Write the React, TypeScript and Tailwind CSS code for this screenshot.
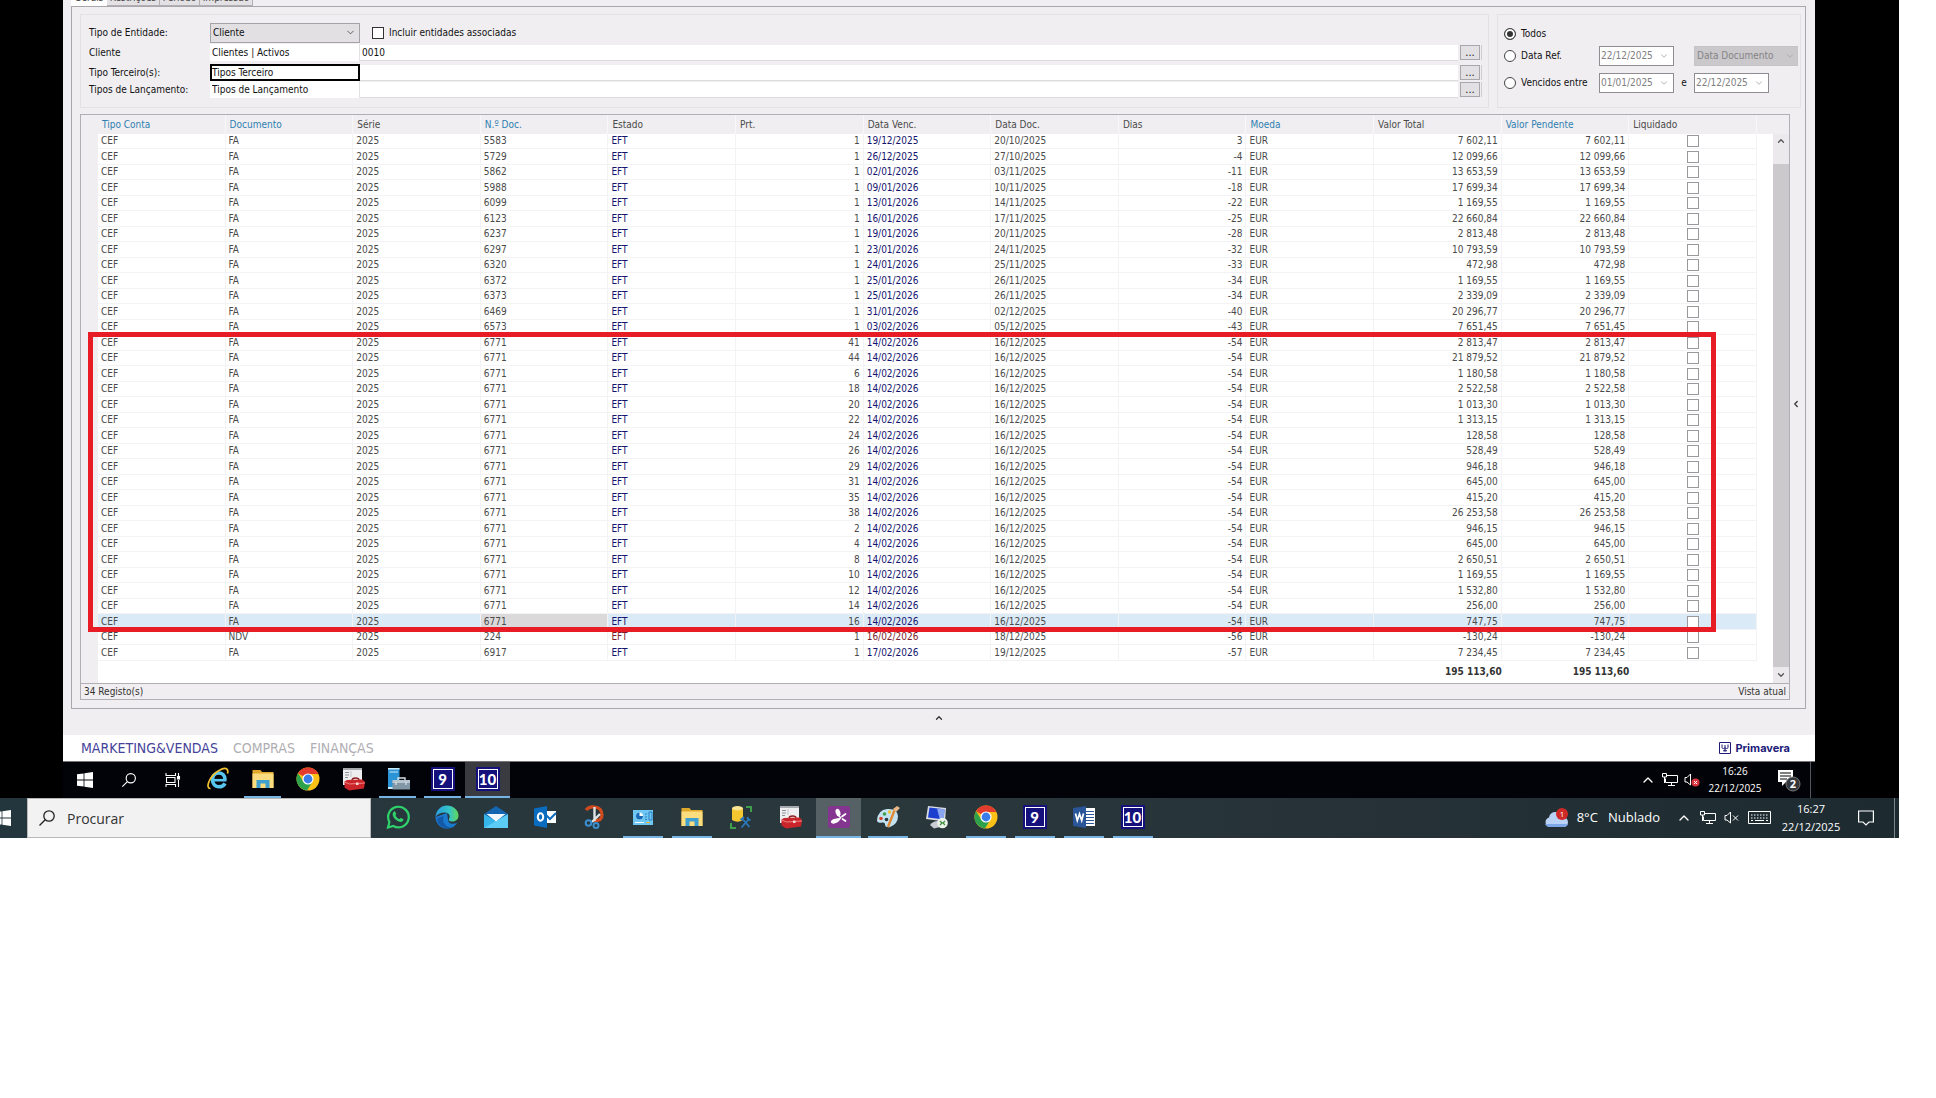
/**
 * @file App.tsx
 * @description Pending documents list inside a remote desktop session.
 */

import clsx from "clsx";
import {
  ChevronDown,
  ChevronLeft,
  ChevronUp,
} from "lucide-react";
import type { JSX, ReactNode } from "react";

type DocumentRow = {
  account: string;
  type: string;
  number: string;
  installment: number;
  dueDate: string;
  docDate: string;
  days: number;
  total: string;
};

function row(
  number: string,
  installment: number,
  dueDate: string,
  docDate: string,
  days: number,
  total: string,
  type = "FA",
): DocumentRow {
  return {
    account: "CEF",
    type,
    number,
    installment,
    dueDate,
    docDate,
    days,
    total,
  };
}

function installmentRow(installment: number, total: string): DocumentRow {
  return row("6771", installment, "14/02/2026", "16/12/2025", -54, total);
}

const documents: DocumentRow[] = [
  row("5583", 1, "19/12/2025", "20/10/2025", 3, "7 602,11"),
  row("5729", 1, "26/12/2025", "27/10/2025", -4, "12 099,66"),
  row("5862", 1, "02/01/2026", "03/11/2025", -11, "13 653,59"),
  row("5988", 1, "09/01/2026", "10/11/2025", -18, "17 699,34"),
  row("6099", 1, "13/01/2026", "14/11/2025", -22, "1 169,55"),
  row("6123", 1, "16/01/2026", "17/11/2025", -25, "22 660,84"),
  row("6237", 1, "19/01/2026", "20/11/2025", -28, "2 813,48"),
  row("6297", 1, "23/01/2026", "24/11/2025", -32, "10 793,59"),
  row("6320", 1, "24/01/2026", "25/11/2025", -33, "472,98"),
  row("6372", 1, "25/01/2026", "26/11/2025", -34, "1 169,55"),
  row("6373", 1, "25/01/2026", "26/11/2025", -34, "2 339,09"),
  row("6469", 1, "31/01/2026", "02/12/2025", -40, "20 296,77"),
  row("6573", 1, "03/02/2026", "05/12/2025", -43, "7 651,45"),
  installmentRow(41, "2 813,47"),
  installmentRow(44, "21 879,52"),
  installmentRow(6, "1 180,58"),
  installmentRow(18, "2 522,58"),
  installmentRow(20, "1 013,30"),
  installmentRow(22, "1 313,15"),
  installmentRow(24, "128,58"),
  installmentRow(26, "528,49"),
  installmentRow(29, "946,18"),
  installmentRow(31, "645,00"),
  installmentRow(35, "415,20"),
  installmentRow(38, "26 253,58"),
  installmentRow(2, "946,15"),
  installmentRow(4, "645,00"),
  installmentRow(8, "2 650,51"),
  installmentRow(10, "1 169,55"),
  installmentRow(12, "1 532,80"),
  installmentRow(14, "256,00"),
  installmentRow(16, "747,75"),
  row("224", 1, "16/02/2026", "18/12/2025", -56, "-130,24", "NDV"),
  row("6917", 1, "17/02/2026", "19/12/2025", -57, "7 234,45"),
];

const columns = [
  { label: "Tipo Conta", sortable: true },
  { label: "Documento", sortable: true },
  { label: "Série", sortable: false },
  { label: "N.º Doc.", sortable: true },
  { label: "Estado", sortable: false },
  { label: "Prt.", sortable: false },
  { label: "Data Venc.", sortable: false },
  { label: "Data Doc.", sortable: false },
  { label: "Dias", sortable: false },
  { label: "Moeda", sortable: true },
  { label: "Valor Total", sortable: false },
  { label: "Valor Pendente", sortable: true },
  { label: "Liquidado", sortable: false },
];

function Cell({
  children,
  className,
}: {
  children?: ReactNode;
  className?: string;
}): JSX.Element {
  return (
    <td
      className={clsx(
        "border-r border-b border-[#f3f2f4] px-[3px] py-0",
        className,
      )}
    >
      {children}
    </td>
  );
}

function BrowseButton({ label }: { label: string }): JSX.Element {
  return (
    <button
      type="button"
      aria-label={label}
      className="h-[15px] w-5 border border-[#a9a7ab] bg-[#e2e0e3] text-[11px] leading-[11px] text-[#111]"
    >
      ...
    </button>
  );
}

function FilterRow({
  id,
  label,
  name,
  value,
  focused,
}: {
  id: string;
  label: string;
  name: string;
  value: string;
  focused?: boolean;
}): JSX.Element {
  return (
    <div className="flex h-[17px] items-center">
      <label htmlFor={id} className="w-[121px]">
        {label}
      </label>
      <input
        aria-label={`${label} filtro`}
        defaultValue={name}
        className={clsx(
          "h-[17px] w-[150px] bg-white",
          focused ? "border-2 border-black" : "border-r border-[#e3e1e4] px-[2px]",
        )}
      />
      <input
        id={id}
        defaultValue={value}
        className="h-4 min-w-0 flex-1 border-b border-[#dddbde] bg-white px-[2px]"
      />
      <div className="ml-[2px] flex w-[22px] border-r border-[#cfcdd0]">
        <BrowseButton label={`Procurar ${label}`} />
      </div>
    </div>
  );
}

function DateField({
  label,
  value,
}: {
  label: string;
  value: string;
}): JSX.Element {
  return (
    <div className="flex h-5 w-[75px] items-center border border-[#8f8d91] bg-white">
      <input
        aria-label={label}
        defaultValue={value}
        className="min-w-0 flex-1 pl-px text-[#808080]"
      />
      <ChevronDown className="mr-1 size-[10px] shrink-0 text-[#a5a5a5]" />
    </div>
  );
}

function RadioOption({
  label,
  checked,
}: {
  label: string;
  checked?: boolean;
}): JSX.Element {
  return (
    <label className="flex w-[95px] items-center gap-[5px]">
      <input
        type="radio"
        name="period"
        defaultChecked={checked}
        className="size-3 appearance-none rounded-full border border-[#444] bg-white checked:border-[#444] checked:bg-[#333] checked:shadow-[inset_0_0_0_2px_white]"
      />
      {label}
    </label>
  );
}

function Filters(): JSX.Element {
  return (
    <div className="flex gap-2 pr-1 text-[10px] leading-[14px] text-[#111]">
      <section className="h-[94px] flex-1 border border-[#e3e1e4] pt-2 pr-[6px] pl-2">
        <div className="flex h-5 items-center">
          <label htmlFor="entity" className="w-[121px]">
            Tipo de Entidade:
          </label>
          <div className="relative">
            <select
              id="entity"
              className="h-5 w-[150px] appearance-none border border-[#a5a3a7] bg-[#e2e0e3] px-[2px]"
            >
              <option>Cliente</option>
            </select>
            <ChevronDown className="absolute top-1 right-1 size-[11px] text-[#555]" />
          </div>
          <label className="ml-3 flex items-center gap-[5px]">
            <input
              type="checkbox"
              className="size-3 appearance-none border border-[#333] bg-white"
            />
            Incluir entidades associadas
          </label>
        </div>
        <div className="mt-px mb-[3px]">
          <FilterRow id="client" label="Cliente" name="Clientes | Activos" value="0010" />
        </div>
        <FilterRow id="third" label="Tipo Terceiro(s):" name="Tipos Terceiro" value="" focused />
        <FilterRow id="entry" label="Tipos de Lançamento:" name="Tipos de Lançamento" value="" />
      </section>
      <section className="h-[94px] w-[304px] border border-[#e3e1e4] pt-[9px] pl-[6px]">
        <div className="flex h-5 items-center">
          <RadioOption label="Todos" checked />
        </div>
        <div className="mt-[2px] flex h-5 items-center">
          <RadioOption label="Data Ref." />
          <DateField label="Data de referência" value="22/12/2025" />
          <div className="relative ml-5">
            <select
              aria-label="Tipo de data"
              className="h-5 w-[104px] appearance-none border border-[#c6c4c7] bg-[#cac8cb] px-[2px] text-[#858387]"
            >
              <option>Data Documento</option>
            </select>
            <ChevronDown className="absolute top-[5px] right-[3px] size-[10px] text-[#a5a3a7]" />
          </div>
        </div>
        <div className="mt-[7px] flex h-5 items-center">
          <RadioOption label="Vencidos entre" />
          <DateField label="Vencidos desde" value="01/01/2025" />
          <span className="w-5 text-center">e</span>
          <DateField label="Vencidos até" value="22/12/2025" />
        </div>
      </section>
    </div>
  );
}

function DocumentGrid(): JSX.Element {
  return (
    <div className="relative mt-[6px] min-w-0 flex-1 border border-[#b1afb3] bg-white text-[10px] text-[#4a4a4a]">
      <div className="flex">
        <div className="min-w-0 flex-1">
          <table className="w-full table-fixed border-separate border-spacing-0 leading-[14px]">
            <colgroup>
              <col className="w-[17px]" />
              {columns.map((column) => (
                <col key={column.label} />
              ))}
              <col className="w-4" />
            </colgroup>
            <thead>
              <tr className="h-[19px] bg-[#f0eef1] text-left">
                <th className="p-0" aria-label="Seleção" />
                {columns.map((column) => (
                  <th
                    key={column.label}
                    className={clsx(
                      "border-r border-[#f8f7f9] px-1 py-0 font-normal",
                      column.sortable && "text-[#2f7fb0]",
                    )}
                  >
                    {column.label}
                  </th>
                ))}
                <th className="p-0" aria-label="Espaço" />
              </tr>
            </thead>
            <tbody>
              {documents.map((doc) => {
                const selected = doc.installment === 16;
                const credit = doc.type === "NDV";
                const accent = credit ? "text-[#7d1c2a]" : "text-[#14146e]";
                const fill = selected && "bg-[#dbeaf7]";
                return (
                  <tr
                    key={`${doc.number}-${doc.installment}`}
                    className="odd:h-[15px] even:h-4"
                  >
                    <td className="bg-[#f0eef1] p-0" />
                    <Cell className={clsx(fill)}>{doc.account}</Cell>
                    <Cell className={clsx(fill)}>{doc.type}</Cell>
                    <Cell className={clsx(fill)}>2025</Cell>
                    <Cell className={clsx(selected && "bg-[#dcd9db]")}>{doc.number}</Cell>
                    <Cell className={clsx(accent, fill)}>EFT</Cell>
                    <Cell className={clsx("text-right", fill)}>{doc.installment}</Cell>
                    <Cell className={clsx(accent, fill)}>{doc.dueDate}</Cell>
                    <Cell className={clsx(fill)}>{doc.docDate}</Cell>
                    <Cell className={clsx("text-right", fill)}>{doc.days}</Cell>
                    <Cell className={clsx(fill)}>EUR</Cell>
                    <Cell className={clsx("text-right", fill)}>{doc.total}</Cell>
                    <Cell className={clsx("text-right", fill)}>{doc.total}</Cell>
                    <Cell className={clsx(fill)}>
                      <input
                        type="checkbox"
                        aria-label={`Liquidado ${doc.number}`}
                        className="mx-auto block size-3 appearance-none border border-[#9a989c] bg-white"
                      />
                    </Cell>
                    <td className="p-0" />
                  </tr>
                );
              })}
            </tbody>
            <tfoot>
              <tr className="h-[22px] font-bold text-[#333]">
                <td className="bg-[#f0eef1] p-0" />
                <td colSpan={10} className="p-0" />
                <td className="p-0 text-right">195 113,60</td>
                <td className="p-0 text-right">195 113,60</td>
                <td colSpan={2} className="p-0" />
              </tr>
            </tfoot>
          </table>
        </div>
        <div className="flex w-4 flex-col bg-[#cbc9cc]">
          <div className="h-[19px] bg-[#f0eef1]" />
          <button
            type="button"
            aria-label="Subir"
            className="flex h-[30px] justify-center bg-[#ebe9ec] pt-[2px]"
          >
            <ChevronUp className="size-[10px] text-[#555]" strokeWidth={3} />
          </button>
          <div className="flex-1" />
          <button
            type="button"
            aria-label="Descer"
            className="flex h-4 items-center justify-center bg-[#ebe9ec]"
          >
            <ChevronDown className="size-[10px] text-[#555]" strokeWidth={3} />
          </button>
        </div>
      </div>
      <footer className="flex h-4 items-center justify-between border-t border-[#b1afb3] bg-[#f0eef1] px-[3px] text-[#333]">
        <span>34 Registo(s)</span>
        <span>Vista atual</span>
      </footer>
      {/* highlight around the split invoice */}
      <div className="pointer-events-none absolute top-[217px] right-[73px] left-[7px] h-[300px] border-5 border-[#e81c24]" />
    </div>
  );
}

function WindowsIcon({ className }: { className?: string }): JSX.Element {
  return (
    <svg viewBox="0 0 16 16" className={clsx("size-4 shrink-0", className)} fill="#fff">
      <path d="M0 2.3 6.6 1.4v6.1H0zM7.4 1.3 16 0v7.5H7.4zM0 8.4h6.6v6.2L0 13.7zM7.4 8.4H16V16l-8.6-1.2z" />
    </svg>
  );
}

function SearchIcon({ className }: { className?: string }): JSX.Element {
  return (
    <svg viewBox="0 0 18 18" className={clsx("shrink-0", className)} fill="none" stroke="currentColor" strokeWidth="1.3">
      <circle cx="11" cy="7" r="5.2" />
      <path d="M7.2 10.8 1.5 16.5" />
    </svg>
  );
}

function TaskViewIcon(): JSX.Element {
  return (
    <svg viewBox="0 0 16 16" className="size-4" fill="none" stroke="#fff" strokeWidth="1.1">
      <path d="M1 1v2.500h9.500V1M1 15v-2.500h9.500V15M1.500 5.500h8.500v5H1.500zM13.500 1v3M13.500 8v7" />
      <rect x="12.500" y="4.500" width="2" height="2.500" fill="#fff" />
    </svg>
  );
}

function ExplorerLegacyIcon(): JSX.Element {
  return (
    <svg viewBox="0 0 24 24" className="size-6" fill="none">
      <path d="M19 12.500C19 8 16 6 12.800 6 9 6 6.500 9 6.500 13s3 6.800 6.500 6.800c3 0 4.800-1.200 6-3.500" stroke="#58c4f0" strokeWidth="3.600" />
      <path d="M6 13.200h14.500" stroke="#58c4f0" strokeWidth="2.600" />
      <path d="M4.500 21.500C-1 22 3 9 13 3.500 19 0 23 1 21.500 6.500" stroke="#f2c230" strokeWidth="1.700" />
    </svg>
  );
}

function FolderIcon(): JSX.Element {
  return (
    <svg viewBox="0 0 24 24" className="size-6">
      <path d="M1.500 3h8l1.500 2h11.500v16h-21z" fill="#e0a92c" />
      <path d="M1.500 6.500h21V21h-21z" fill="#fbdc7e" />
      <path d="M5.500 21v-8h13v8h-4v-4.500h-5V21z" fill="#3f9fcf" />
    </svg>
  );
}

function ChromeIcon(): JSX.Element {
  return (
    <svg viewBox="0 0 24 24" className="size-6">
      <circle cx="12" cy="12" r="11.500" fill="#fbc116" />
      <path d="M12 12 2 6.300A11.500 11.500 0 0 1 22 6.300L22 7H12z" fill="#e33b2e" />
      <path d="M2 6.300A11.500 11.500 0 0 0 11 23.500L16.500 14.500 12 12 7.300 14.500z" fill="#2da14c" />
      <circle cx="12" cy="12" r="5.600" fill="#fff" />
      <circle cx="12" cy="12" r="4.400" fill="#3b7de8" />
    </svg>
  );
}

function ToolboxIcon(): JSX.Element {
  return (
    <svg viewBox="0 0 24 24" className="size-6">
      <path d="M2 1h19v17H2z" fill="#eeeef0" />
      <path d="M2 1h19v2H2z" fill="#a6a9ae" />
      <path d="M4 5.500h4M4 8h4M4 10.500h3" stroke="#8d9096" />
      <path d="M10 4v6" stroke="#c2c5ca" />
      <path d="M11 13.500q0-2.500 3.500-2.500t3.500 2" fill="none" stroke="#8c1a1c" strokeWidth="1.300" />
      <path d="M3.500 14.500 6 13l15.500-.5L24 15l-1 6.500-15 2-4.500-3z" fill="#c9252b" />
      <path d="m3.500 15 5 2L24 16" fill="none" stroke="#ee8681" />
      <path d="M15 15.500h2.500v2.500H15z" fill="#f3d8d4" />
    </svg>
  );
}

function ServerIcon(): JSX.Element {
  return (
    <svg viewBox="0 0 24 24" className="size-6">
      <path d="M2 1h11.500v21H2z" fill="#2a94d6" />
      <path d="M2 1h11.500v1.500H2zM3.500 4.500h8.500v1H3.500zM2 20h8v2H2z" fill="#c9e8fa" />
      <path d="M12 13v-2h7v2" fill="none" stroke="#d7e0e6" strokeWidth="1.400" />
      <path d="M6.500 13H24v9.500H6.500z" fill="#8297a6" />
      <path d="M6.500 13H24v3H6.500z" fill="#b7c5cf" />
      <path d="M10 15v3M20 15v3" stroke="#e9eff3" />
    </svg>
  );
}

function ErpIcon({ version }: { version: string }): JSX.Element {
  return (
    <span className="flex size-6 items-center justify-center bg-[#14107c] p-[2px]">
      <span className="flex size-full items-center justify-center border border-white font-[Lato] text-[15px] leading-none font-black text-white">
        {version}
      </span>
    </span>
  );
}

function WhatsAppIcon(): JSX.Element {
  return (
    <svg viewBox="0 0 24 24" className="size-6" fill="none">
      <path d="M2 22.500 3.400 17A10.300 10.300 0 1 1 7.300 21z" stroke="#2fd16a" strokeWidth="2.200" />
      <path d="M7.200 7.200c1.500-1.800 2-1 3 1.500.2.800-1 1.300-.6 2 1 1.700 2 2.500 3.600 3.200.8.200 1-1.200 1.800-1 2.700 1.200 3 1.300 2 2.800-1.500 2-4 1.200-6.500-.4C8 13.300 5.500 10 7.200 7.200z" fill="#2fd16a" />
    </svg>
  );
}

function EdgeIcon(): JSX.Element {
  return (
    <svg viewBox="0 0 24 24" className="size-6">
      <defs>
        <linearGradient id="edgeTop" x1="0" x2="1">
          <stop offset="0" stopColor="#2a9be0" />
          <stop offset="0.600" stopColor="#35c3c9" />
          <stop offset="1" stopColor="#62d957" />
        </linearGradient>
      </defs>
      <path d="M.5 12A11.500 11.500 0 0 0 12 23.500c5 0 8.500-2.500 10-5.800-3 1.800-9 1.500-9-3.200L12 8z" fill="#1a7ad0" />
      <path d="M9 11c-2.500 5 1 11 7 11.500C9 25 1.500 20 2.500 13z" fill="#1458a8" />
      <path d="M.5 12C1 5 6 .5 12 .5S23.500 5 23.500 10.500c0 4-3 6-6.500 6-3 0-3.700-1.200-3-2.500 2-3.500-.5-6.500-4-6.500-4.500 0-8 2-9.500 4.500z" fill="url(#edgeTop)" />
    </svg>
  );
}

function MailIcon(): JSX.Element {
  return (
    <svg viewBox="0 0 24 24" className="size-6">
      <path d="M0 9 12 1l12 8-12 8z" fill="#1566b0" />
      <path d="M0 9v14h24z" fill="#35b5ea" />
      <path d="M24 9v14H0z" fill="#5accf5" />
      <path d="M2.500 9h19L12 16.500z" fill="#f2f9fd" />
    </svg>
  );
}

function OutlookIcon(): JSX.Element {
  return (
    <svg viewBox="0 0 24 24" className="size-6">
      <path d="M12 6h11v12H12z" fill="#fff" />
      <path d="m13 10 4 4 6-6" stroke="#0d6cbd" strokeWidth="2" fill="none" />
      <path d="M1 3.500 14 1v22L1 20.500z" fill="#0a6cbe" />
      <ellipse cx="7.500" cy="12" rx="2.700" ry="3.700" fill="none" stroke="#fff" strokeWidth="2" />
    </svg>
  );
}

function SnipIcon(): JSX.Element {
  return (
    <svg viewBox="0 0 24 24" className="size-6" fill="none">
      <path d="M4 5Q7 1 13 2q7 1 7 8 0 6-8 6" stroke="#d04a1e" strokeWidth="3.200" />
      <path d="M12.500 2v14M18 9l-8 8" stroke="#dfe3e6" strokeWidth="2.400" />
      <circle cx="6.500" cy="18" r="2.800" stroke="#3b8fd0" strokeWidth="2" />
      <circle cx="14" cy="20.500" r="2.500" stroke="#3b8fd0" strokeWidth="2" />
    </svg>
  );
}

function PanelIcon(): JSX.Element {
  return (
    <svg viewBox="0 0 24 24" className="size-6">
      <path d="M2 5h20v15H2z" fill="#6ec6f2" />
      <circle cx="8.500" cy="11" r="3.500" fill="#fff" />
      <path d="M8.500 11V7.500A3.500 3.500 0 1 0 12 11z" fill="#1769b5" />
      <path d="M14 9h2M14 12h2M14 14.500h2M18 7h3v8h-3z" fill="none" stroke="#2c7fc2" />
      <path d="M4 17.500h9" stroke="#fff" />
      <path d="M15 17.500h4" stroke="#f0b62f" />
    </svg>
  );
}

function DatabaseToolIcon(): JSX.Element {
  return (
    <svg viewBox="0 0 24 24" className="size-6" fill="none">
      <path d="M3 3v12q5.500 3.500 11 0V3z" fill="#f5c630" />
      <ellipse cx="8.500" cy="3.200" rx="5.500" ry="2.200" fill="#fbe593" />
      <path d="M17 2h5v5M2 18v5h5" stroke="#3ea04b" strokeWidth="2" />
      <path d="m13.500 14 7 8M20 14l-7.500 8.500" stroke="#2a78ba" strokeWidth="1.800" />
      <path d="m11.500 15 3.500-3M18.500 12l.5 2.500 2.500.5" stroke="#2a78ba" strokeWidth="2" />
    </svg>
  );
}

function SplashIcon(): JSX.Element {
  return (
    <svg viewBox="0 0 24 24" className="size-6">
      <rect x="1" y="1" width="22" height="22" rx="2" fill="#83358f" />
      <ellipse cx="11" cy="7.500" rx="2.300" ry="3.800" transform="rotate(-18 11 7.500)" fill="#fff" />
      <path d="M4 17.500q-1-2 3-3.500 5-1.500 7-1-2 4.500-6.500 5.500-2.800.5-3.500-1z" fill="#fff" />
      <path d="m15 11.500 3.500-2.500M15.500 14l3 2" stroke="#fff" strokeWidth="1.700" strokeLinecap="round" />
      <path d="M11.500 10.500 14 13" stroke="#fff" strokeWidth="1.500" />
    </svg>
  );
}

function PaintIcon(): JSX.Element {
  return (
    <svg viewBox="0 0 24 24" className="size-6">
      <path d="M1 15Q2 5 11 4q10-1 11 7 0 8-8 11-5 1-5-3 0-2-3-1.500-5 1-5-2.500z" fill="#c3e2f1" />
      <circle cx="5" cy="13.500" r="1.800" fill="#d6442c" />
      <circle cx="8.500" cy="9" r="1.800" fill="#3e9e4d" />
      <circle cx="13.500" cy="7" r="1.700" fill="#f0c330" />
      <circle cx="10.500" cy="14.500" r="1.800" fill="#28373d" />
      <path d="m12 22 7-18" stroke="#e08a35" strokeWidth="2.400" />
      <path d="m17 4 4-3 3 2-4 4z" fill="#e9b889" />
    </svg>
  );
}

function RemoteIcon(): JSX.Element {
  return (
    <svg viewBox="0 0 24 24" className="size-6">
      <path d="m3 1 18 2-1 13.500L1 14z" fill="#d9dde2" />
      <path d="m4.500 2.500 15 1.700-.8 10.300L3 12.500z" fill="#1c3fd0" />
      <path d="m12 3.500 7.500.7-.8 10.300-4-.5z" fill="#8aa6f0" />
      <path d="M5 20q3-4 8-4l2 6-6 1.500z" fill="#c9cdd2" />
      <circle cx="17.500" cy="18" r="5.300" fill="#eef2ec" />
      <path d="m15 16 2 2-2 2M20 16l-2 2 2 2" fill="none" stroke="#3b8d3a" strokeWidth="1.300" />
    </svg>
  );
}

function WordIcon(): JSX.Element {
  return (
    <svg viewBox="0 0 24 24" className="size-6">
      <path d="M12 3h11v18H12z" fill="#fff" />
      <path d="M14 6.500h8M14 9.500h8M14 12.500h8M14 15.500h8M14 18.500h8" stroke="#2a5699" strokeWidth="1.200" />
      <path d="M1 3 14 1v22L1 21z" fill="#2a5699" />
      <path d="m3.500 8.500 1.800 7 2.200-6.500 2.200 6.500 1.800-7" fill="none" stroke="#fff" strokeWidth="1.700" />
    </svg>
  );
}

function NetworkIcon(): JSX.Element {
  return (
    <svg viewBox="0 0 16 14" className="h-[14px] w-4" fill="none" stroke="#fff">
      <path d="M5 2.500h10.500v7H3.500v-4M9.500 9.500v3M6 12.500h7" />
      <path d="M.5.500h4v3.500h-4zM2.500 4v6" />
    </svg>
  );
}

function SoundIcon({ muted }: { muted: boolean }): JSX.Element {
  return (
    <svg viewBox="0 0 16 14" className="h-[14px] w-4" fill="none" stroke="#fff">
      <path d="M1 4.500h2L6.500 1v11L3 9H1z" />
      {muted ? (
        <>
          <circle cx="11.500" cy="9.500" r="4" fill="#d9333f" stroke="none" />
          <path d="m10 8 3 3M13 8l-3 3" />
        </>
      ) : (
        <path d="m9 4.500 5 5M14 4.500l-5 5" />
      )}
    </svg>
  );
}

type TaskButtonProps = {
  label: string;
  icon: ReactNode;
  open?: boolean;
  active?: boolean;
};

const remoteTasks: TaskButtonProps[] = [
  { label: "Internet Explorer", icon: <ExplorerLegacyIcon /> },
  { label: "Ficheiros", icon: <FolderIcon />, open: true },
  { label: "Chrome", icon: <ChromeIcon /> },
  { label: "Ferramentas", icon: <ToolboxIcon /> },
  { label: "Servidor", icon: <ServerIcon />, open: true },
  { label: "Primavera 9", icon: <ErpIcon version="9" />, open: true },
  { label: "Primavera 10", icon: <ErpIcon version="10" />, open: true, active: true },
];

const localTasks: TaskButtonProps[] = [
  { label: "WhatsApp", icon: <WhatsAppIcon /> },
  { label: "Edge", icon: <EdgeIcon /> },
  { label: "Correio", icon: <MailIcon /> },
  { label: "Outlook", icon: <OutlookIcon /> },
  { label: "Recorte", icon: <SnipIcon /> },
  { label: "Painel", icon: <PanelIcon />, open: true },
  { label: "Explorador", icon: <FolderIcon />, open: true },
  { label: "Base de dados", icon: <DatabaseToolIcon /> },
  { label: "Administrador", icon: <ToolboxIcon /> },
  { label: "Splashtop", icon: <SplashIcon />, open: true, active: true },
  { label: "Paint", icon: <PaintIcon />, open: true },
  { label: "Ambiente remoto", icon: <RemoteIcon /> },
  { label: "Google Chrome", icon: <ChromeIcon />, open: true },
  { label: "ERP 9", icon: <ErpIcon version="9" />, open: true },
  { label: "Word", icon: <WordIcon />, open: true },
  { label: "ERP 10", icon: <ErpIcon version="10" />, open: true },
];

function RemoteTaskbar(): JSX.Element {
  return (
    <div className="flex h-[37px] items-center justify-between border-t border-[#77757a] bg-[#020308]">
      <div className="flex h-full">
        <button type="button" aria-label="Iniciar" className="flex w-11 items-center justify-center">
          <WindowsIcon />
        </button>
        <button type="button" aria-label="Pesquisar" className="flex w-11 items-center justify-center text-white">
          <SearchIcon className="size-4" />
        </button>
        <button type="button" aria-label="Vista de tarefas" className="flex w-11 items-center justify-center">
          <TaskViewIcon />
        </button>
        {remoteTasks.map((task) => (
          <button
            key={task.label}
            type="button"
            aria-label={task.label}
            className={clsx(
              "flex w-[45px] flex-col items-center justify-between",
              task.active && "bg-[#3a3b40]",
            )}
          >
            <span className="flex flex-1 items-center">{task.icon}</span>
            <span
              className={clsx(
                "h-[2px]",
                task.active ? "w-full" : "w-[37px]",
                task.open && "bg-[#76b4e4]",
              )}
            />
          </button>
        ))}
      </div>
      <div className="flex h-full items-center text-white">
        <ChevronUp className="size-4" strokeWidth={2} />
        <span className="ml-[6px]">
          <NetworkIcon />
        </span>
        <span className="ml-[6px]">
          <SoundIcon muted />
        </span>
        <time className="ml-2 w-[54px] text-center text-[10px] leading-[17px]">
          16:26
          <br />
          22/12/2025
        </time>
        <svg viewBox="0 0 24 24" className="ml-[15px] size-6">
          <path d="M1 2h15v12H9l-4 4v-4H1z" fill="#fff" />
          <path d="M3 5h11M3 8h11M3 11h7" stroke="#020308" strokeWidth="1.200" />
          <circle cx="16" cy="16" r="7" fill="#33363a" stroke="#777" />
          <text x="16" y="20" textAnchor="middle" fontSize="11" fontWeight="700" fill="#fff">
            2
          </text>
        </svg>
        <span className="ml-[9px] h-full w-px bg-[#55565a]" />
        <span className="w-1" />
      </div>
    </div>
  );
}

function LocalTaskbar(): JSX.Element {
  return (
    <div className="flex h-10 items-center justify-between bg-[linear-gradient(90deg,#24363d,#2a383c_45%,#263237_70%,#1d2b31)]">
      <div className="flex h-full">
        <button type="button" aria-label="Iniciar" className="flex w-[27px] items-center overflow-hidden">
          <WindowsIcon className="-ml-[5px]" />
        </button>
        <label className="flex w-[344px] items-center gap-[11px] border border-[#b8b8b8] bg-[#f2f2f2] pl-[10px] text-[#222]">
          <SearchIcon className="size-[18px]" />
          <input
            aria-label="Procurar"
            placeholder="Procurar"
            className="min-w-0 flex-1 text-[14px] placeholder:text-[#333]"
          />
        </label>
        <div className="ml-[2px] flex">
          {localTasks.map((task) => (
            <button
              key={task.label}
              type="button"
              aria-label={task.label}
              className="flex w-[49px] justify-center"
            >
              <span
                className={clsx(
                  "flex h-full flex-col items-center",
                  task.active ? "w-[45px] bg-[#566165]" : "w-10",
                )}
              >
                <span className="flex flex-1 items-center">{task.icon}</span>
                <span
                  className={clsx("h-[2px] w-full", task.open && "bg-[#76b4e4]")}
                />
              </span>
            </button>
          ))}
        </div>
      </div>
      <div className="flex h-full items-center text-white">
        <svg viewBox="0 0 26 22" className="h-[22px] w-[26px]">
          <path d="M6 20a5 5 0 0 1 0-9.500Q7 5 12.500 5q5 0 6.500 5 5.500 0 6 5 0 5-5 5z" fill="#b9d2f5" />
          <path d="M6 20q-3-.5-4-3h23q-1 3-5 3z" fill="#7da7e6" />
          <circle cx="19" cy="7" r="6" fill="#cf2a27" />
          <text x="19" y="10" textAnchor="middle" fontSize="8" fill="#fff">
            1
          </text>
        </svg>
        <span className="ml-2 text-[13px] whitespace-pre">8°C   Nublado</span>
        <ChevronUp className="ml-4 size-4" strokeWidth={2} />
        <span className="ml-2">
          <NetworkIcon />
        </span>
        <span className="ml-2">
          <SoundIcon muted={false} />
        </span>
        <svg viewBox="0 0 23 14" className="ml-2 h-[14px] w-[23px]" fill="none" stroke="#fff">
          <path d="M.5.500h22v12H.5z" />
          <path d="M3 4h17M3 7h17" strokeDasharray="1.500 1.500" />
          <path d="M3 9.500h2M7 9.500h9M18 9.500h2" />
        </svg>
        <time className="ml-[10px] w-[60px] text-center text-[11px] leading-[18px]">
          16:27
          <br />
          22/12/2025
        </time>
        <svg viewBox="0 0 16 16" className="ml-[17px] size-4" fill="none" stroke="#fff" strokeWidth="1.200">
          <path d="M.6 1h14.800v11H11l-3 3-3-3H.6z" />
        </svg>
        <span className="ml-5 h-full w-px bg-[#7b868a]" />
        <span className="w-1" />
      </div>
    </div>
  );
}

function ErpWindow(): JSX.Element {
  return (
    <div className="bg-[#f0eef1]">
      <div className="flex h-[6px] items-end overflow-hidden pl-2 text-[10px] leading-[14px] text-[#444]">
        <button type="button" className="w-9 shrink-0 bg-white pb-px">
          Gerais
        </button>
        <button type="button" className="w-[53px] shrink-0 border-r border-b border-[#b1afb3] bg-[#e3e1e4]">
          Restrições
        </button>
        <button type="button" className="w-10 shrink-0 border-r border-b border-[#b1afb3] bg-[#e3e1e4]">
          Período
        </button>
        <button type="button" className="w-[53px] shrink-0 border-r border-b border-[#b1afb3] bg-[#e3e1e4]">
          Impressão
        </button>
      </div>
      <div className="mr-[9px] ml-2 border border-[#a9a7ab] pt-[7px] pb-2 pl-2">
        <Filters />
        <div className="flex">
          <DocumentGrid />
          <button
            type="button"
            aria-label="Abrir painel lateral"
            className="flex w-[15px] items-center pl-px"
          >
            <ChevronLeft className="size-[10px] text-[#333]" strokeWidth={3} />
          </button>
        </div>
      </div>
      <button
        type="button"
        aria-label="Expandir"
        className="flex h-[26px] w-full justify-center pt-1"
      >
        <ChevronUp className="size-[10px] text-[#333]" strokeWidth={3} />
      </button>
      <nav className="flex h-[26px] items-center justify-between bg-white pr-[25px] pl-[18px] text-[14px]">
        <div className="flex gap-[15px] text-[#b0aeb2]">
          <a href="#marketing" className="text-[#45439a]">
            MARKETING&amp;VENDAS
          </a>
          <a href="#compras">COMPRAS</a>
          <a href="#financas">FINANÇAS</a>
        </div>
        <div className="flex items-center gap-1 font-[Inter] text-[11px] font-bold text-[#211b78]">
          <svg viewBox="0 0 12 12" className="size-3" fill="none" stroke="#211b78">
            <path d="M.5.500h11v11H.5z" />
            <path d="M3 2.500v3q0 1 1.500 1T6 5.500q0 1 1.500 1T9 5.500v-3M6 3v7M4 9q2-2 4 0" />
          </svg>
          Primavera
        </div>
      </nav>
    </div>
  );
}

export default function App(): JSX.Element {
  return (
    <main className="min-h-screen bg-white font-['Open_Sans',sans-serif]">
      <div className="mr-[37px]">
        <div className="bg-black pr-[84px] pl-[63px]">
          <div className="font-['DejaVu_Sans_Condensed','Noto_Sans',sans-serif]">
            <ErpWindow />
          </div>
          <RemoteTaskbar />
        </div>
        <LocalTaskbar />
      </div>
    </main>
  );
}
